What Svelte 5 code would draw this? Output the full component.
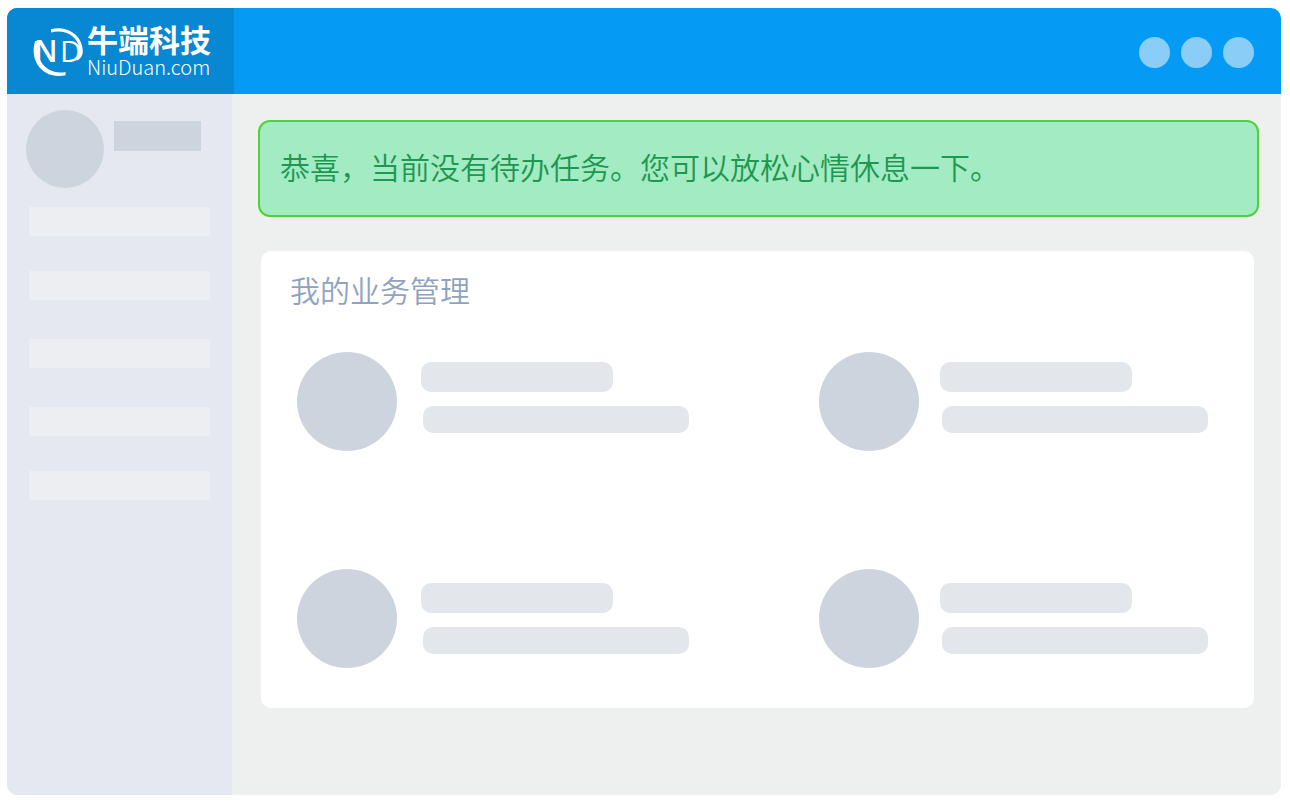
<script>
	let { message = '恭喜，当前没有待办任务。您可以放松心情休息一下。' } = $props();

	const actions = [1, 2, 3];

	// entries per menu section
	const sections = [2, 1, 2];

	const rows = [
		['a', 'b'],
		['c', 'd']
	];
</script>

<div class="shell">
	<header class="topbar">
		<a class="brand" href="/" aria-label="牛端科技 NiuDuan.com">
			<svg class="mark" viewBox="0 0 50 50" aria-hidden="true">
				<path d="M18 3.200C34 -1 49.500 9 49.800 25C49.800 29 48 32.500 44 34.500L43 32.500C46 30 47 28 46.700 24.500C45.500 10 32 2.800 18 6.400Z" />
				<path d="M2.200 15H5C0.500 31 13 50 32.500 46V49.200C9 54 -4 34 2.200 15Z" />
				<text x="1" y="36" class="mark-n">N</text>
				<text x="27" y="36" class="mark-d">D</text>
			</svg>
			<span class="brand-text">
				<span class="brand-name">牛端科技</span>
				<span class="brand-domain">NiuDuan.com</span>
			</span>
		</a>
		<div class="actions">
			{#each actions as action (action)}
				<span class="dot"></span>
			{/each}
		</div>
	</header>

	<div class="body">
		<aside class="sidebar">
			<div class="profile">
				<span class="avatar"></span>
				<span class="username"></span>
			</div>
			<nav class="menu">
				{#each sections as count}
					<div class="section">
						{#each { length: count } as _}
							<span class="menu-item"></span>
						{/each}
					</div>
				{/each}
			</nav>
		</aside>

		<main class="content">
			<p class="notice" role="status">{message}</p>

			<section class="card">
				<h2>我的业务管理</h2>
				<div class="rows">
					{#each rows as row}
						<div class="row">
							{#each row as item (item)}
								<div class="item">
									<span class="circle"></span>
									<span class="lines">
										<span class="line short"></span>
										<span class="line long"></span>
									</span>
								</div>
							{/each}
						</div>
					{/each}
				</div>
			</section>
		</main>
	</div>
</div>

<style>
	:global(body) {
		background: #fff;
		font-family: 'Noto Sans CJK SC', 'Noto Sans', sans-serif;
	}

	.shell {
		display: flex;
		flex-direction: column;
		box-sizing: border-box;
		min-height: calc(100vh - 15px);
		margin: 8px 9px 7px 7px;
		border-radius: 10px;
		overflow: hidden;
	}

	.topbar {
		display: flex;
		align-items: stretch;
		justify-content: space-between;
		height: 86px;
		background: #059bf4;
	}

	.brand {
		display: flex;
		align-items: center;
		gap: 4px;
		box-sizing: border-box;
		width: 227px;
		padding-left: 26px;
		background: #0887d2;
		color: #fff;
		text-decoration: none;
	}

	.mark {
		width: 50px;
		height: 50px;
		flex-shrink: 0;
		overflow: visible;
		fill: #fff;
	}

	.mark-n,
	.mark-d {
		font-family: 'Open Sans', 'Noto Sans', sans-serif;
		font-size: 30px;
	}

	.mark-n {
		font-weight: 600;
	}

	.brand-text {
		display: flex;
		flex-direction: column;
		padding-top: 2px;
	}

	.brand-name {
		font-size: 31px;
		font-weight: 700;
		line-height: 30px;
	}

	.brand-domain {
		font-size: 20px;
		font-weight: 300;
		line-height: 26px;
	}

	.actions {
		display: flex;
		align-items: center;
		gap: 11px;
		padding: 3px 27px 0 0;
	}

	.dot {
		width: 31px;
		height: 31px;
		border-radius: 50%;
		background: #8acef7;
	}

	.body {
		display: flex;
		flex: 1;
	}

	.sidebar {
		flex: 0 0 225px;
		box-sizing: border-box;
		padding: 16px 22px 0 19px;
		background: #e5e8f0;
	}

	.profile {
		display: flex;
		gap: 10px;
	}

	.avatar {
		width: 78px;
		height: 78px;
		border-radius: 50%;
		background: #cdd4de;
	}

	.username {
		width: 87px;
		height: 30px;
		margin-top: 11px;
		background: #cdd4de;
	}

	.menu {
		display: flex;
		flex-direction: column;
		gap: 39px;
		margin: 19px 0 0 3px;
	}

	.section {
		display: flex;
		flex-direction: column;
		gap: 35px;
	}

	.menu-item {
		height: 29px;
		background: #edeef2;
	}

	.content {
		flex: 1;
		min-width: 0;
		padding: 26px 22px 40px 26px;
		background: #eef0f0;
	}

	.notice {
		margin: 0;
		padding: 22px 20px 27px;
		border: 2px solid #51d136;
		border-radius: 12px;
		background: #a2ebc3;
		color: #1e9751;
		font-size: 30px;
		font-weight: 350;
		line-height: 44px;
	}

	.card {
		margin: 34px 5px 0 3px;
		padding: 16px 29px 40px;
		border-radius: 10px;
		background: #fff;
	}

	h2 {
		margin: 0;
		color: #8fa3c1;
		font-size: 30px;
		font-weight: 350;
		line-height: 44px;
	}

	.rows {
		display: flex;
		flex-direction: column;
		gap: 118px;
		margin: 41px 0 0 7px;
	}

	.row {
		display: grid;
		grid-template-columns: 522px 1fr;
	}

	.item {
		display: flex;
		align-items: center;
		gap: 24px;
	}

	.item:nth-child(even) {
		gap: 21px;
	}

	/* the first row keeps its lines closer to the top */
	.row:first-child .item {
		align-items: flex-start;
	}

	.row:first-child .lines {
		margin-top: 10px;
	}

	.circle {
		width: 100px;
		height: 99px;
		border-radius: 50%;
		background: #cdd4de;
	}

	.lines {
		display: flex;
		flex-direction: column;
		gap: 14px;
	}

	.line {
		border-radius: 10px;
		background: #e3e6eb;
	}

	.short {
		width: 192px;
		height: 30px;
	}

	.long {
		width: 266px;
		height: 27px;
		margin-left: 2px;
	}
</style>
